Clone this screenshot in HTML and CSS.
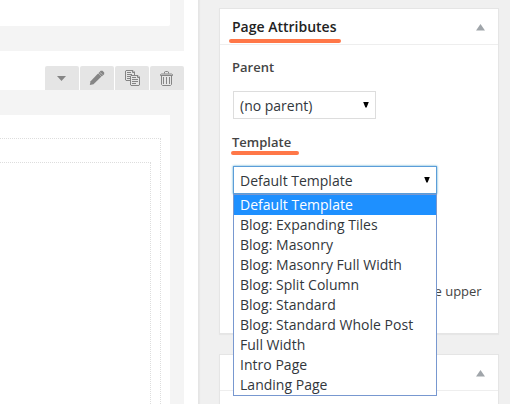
FILE: index.html
```html
<!DOCTYPE html>
<html lang="en">
<head>
<meta charset="utf-8">
<title>Page Attributes</title>
<link rel="stylesheet" href="styles.css">
</head>
<body>
<main class="editor">
  <section class="block block-first"><div class="block-body"></div></section>
  <div class="toolbar">
    <span class="tool"><svg width="34" height="24" viewBox="0 0 34 24"><path d="M12 10h9l-4.500 5z" fill="#858585"/></svg></span>
    <span class="tool"><svg width="34" height="24" viewBox="0 0 34 24"><path d="M9.800 19l.8-3.800 7.900-8.200 3.200 3.200L13.500 18.300z" fill="#858585"/><path d="M18.500 7l2.200-2.200h1.800l1.700 1.800v1.700L21.700 10.500z" fill="#858585"/><path d="M18.300 7.300l3.300 3.300M19.700 6l3.300 3.300" stroke="#e5e5e5" stroke-width=".8" stroke-dasharray="1.2 .7"/></svg></span>
    <span class="tool"><svg width="34" height="24" viewBox="0 0 34 24" fill="none" stroke="#858585"><path d="M15 14.500h-4l-.5-.5V5l.5-.5h7l1.500 1.500v3M12 6.500h4M12 8.500h5M12 10.500h3M12 12.500h3M17.500 4.500v2h2"/><path d="M16 9.500h7l1.500 1.500v8l-.5.500h-8l-.5-.5v-9zM22.500 9.500v2h2M17 11.500h4M17 13.500h6M17 15.500h6M17 17.500h4"/></svg></span>
    <span class="tool"><svg width="34" height="24" viewBox="0 0 34 24" fill="none" stroke="#858585"><path d="M10.500 9.500v-1l1-.5h10l1 .5v1zM14.500 7.500V6l1-.5h2l1 .5v1.500M11.500 9.500v9l1 1h8l1-1v-9M13.500 11v7M16.500 11v7M19.500 11v7"/></svg></span>
  </div>
  <section class="block block-second">
    <div class="block-body"><div class="drop-area"><div class="drop-inner"></div></div></div>
  </section>
</main>
<aside class="sidebar">
  <section class="postbox">
    <header class="postbox-head"><h2 class="title marked">Page Attributes</h2><svg class="toggle" width="9" height="7" viewBox="0 0 9 7"><path d="M4.500 0L9 6.500H0z" fill="#a0a5aa"/></svg></header>
    <div class="postbox-body">
      <h3 class="label">Parent</h3>
      <div class="select select-parent"><span>(no parent)</span><i class="arrow"></i></div>
      <h3 class="label label-template marked">Template</h3>
      <div class="select select-template"><span>Default Template</span><i class="arrow"></i>
        <ul class="menu">
          <li class="selected">Default Template</li>
          <li>Blog: Expanding Tiles</li>
          <li>Blog: Masonry</li>
          <li>Blog: Masonry Full Width</li>
          <li>Blog: Split Column</li>
          <li>Blog: Standard</li>
          <li>Blog: Standard Whole Post</li>
          <li>Full Width</li>
          <li>Intro Page</li>
          <li>Landing Page</li>
        </ul>
      </div>
      <p class="help">e upper</p>
    </div>
  </section>
  <section class="postbox postbox-next">
    <header class="postbox-head"><svg class="toggle" width="9" height="7" viewBox="0 0 9 7"><path d="M4.500 0L9 6.500H0z" fill="#a0a5aa"/></svg></header>
  </section>
</aside>
</body>
</html>
```

FILE: styles.css
```css
* { box-sizing: border-box; }
html { height: 404px; overflow: hidden; }
body {
  margin: 0;
  width: 510px;
  height: 404px;
  overflow: hidden;
  display: flex;
  background: #f0f0f0;
  color: #444;
  font-family: "Open Sans", sans-serif;
}
h2, h3, p, ul { margin: 0; padding: 0; }
svg { display: block; }

.editor {
  width: 199px;
  height: 404px;
  flex: none;
  background: #fff;
  border-right: 1px solid #e5e5e5;
  box-shadow: 1px 0 1px rgba(0, 0, 0, .03);
}
.block { width: 184px; background: #f4f4f4; padding-right: 14px; }
.block-first { height: 51px; }
.block-first .block-body { height: 26px; background: #fff; border-bottom-right-radius: 2px; }
.toolbar { display: flex; gap: 1px; margin: 15px 0 0 45px; }
.tool {
  width: 34px;
  height: 24px;
  background: #e5e5e5;
  border-radius: 2px 2px 0 0;
}
.block-second { height: 314px; padding-top: 25px; }
.block-second .block-body { height: 289px; background: #fff; padding: 23px 9px 0 0; }
.drop-area {
  height: 266px;
  border: 1px dotted #ddd;
  border-width: 1px 1px 0 0;
  padding: 23px 9px 0 0;
}
.drop-inner { height: 242px; border: 1px dotted #ddd; border-width: 1px 1px 0 0; }

.sidebar { padding: 8px 0 0 20px; }
.postbox {
  width: 280px;
  height: 326px;
  background: #fff;
  border: 1px solid #e5e5e5;
  box-shadow: 0 1px 1px rgba(0, 0, 0, .04);
}
.postbox-next { height: 50px; margin-top: 20px; border-bottom: 0; }
.postbox-head {
  height: 36px;
  display: flex;
  align-items: center;
  padding: 0 13px 0 12px;
  border-bottom: 1px solid #eee;
}
.toggle { margin-left: auto; position: relative; top: 1px; }
.title { font-size: 14px; line-height: 20px; font-weight: 600; color: #222; }
.marked { position: relative; width: max-content; }
.marked::after {
  content: "";
  position: absolute;
  left: -3px;
  right: -4px;
  top: 22px;
  height: 4px;
  border-radius: 2px;
  background: #ff7748;
}
.postbox-body { padding: 12px 13px 0; }
.label { font-size: 13px; line-height: 20px; font-weight: 600; margin-left: -1px; }
.label-template { margin-top: 13px; }
.label-template::after { left: -1px; right: -8px; top: 19px; }
.select {
  position: relative;
  height: 28px;
  display: flex;
  align-items: center;
  justify-content: space-between;
  padding: 0 6px;
  border: 1px solid #ddd;
  background: #fff;
  color: #32373c;
  font-size: 14px;
}
.select-parent { width: 143px; margin-top: 14px; }
.select-template {
  width: 204px;
  margin-top: 14px;
  border-color: #5b9dd9;
  box-shadow: 0 0 2px rgba(30, 140, 190, .8);
}
.arrow {
  width: 6px;
  height: 6px;
  margin-top: -1px;
  background: #000;
  clip-path: polygon(0 0, 100% 0, 60% 100%, 40% 100%);
}
.menu {
  position: absolute;
  z-index: 1;
  left: -1px;
  top: 27px;
  width: 204px;
  height: 202px;
  list-style: none;
  background: #fff;
  border: 1px solid #7898d0;
}
.menu li { height: 20px; line-height: 20px; padding-left: 6px; white-space: nowrap; letter-spacing: .02px; }
.menu .selected { background: #1e90ff; color: #fff; }
.help { margin: 87px 0 0 201.500px; font-size: 13px; line-height: 20px; white-space: nowrap; }
```
